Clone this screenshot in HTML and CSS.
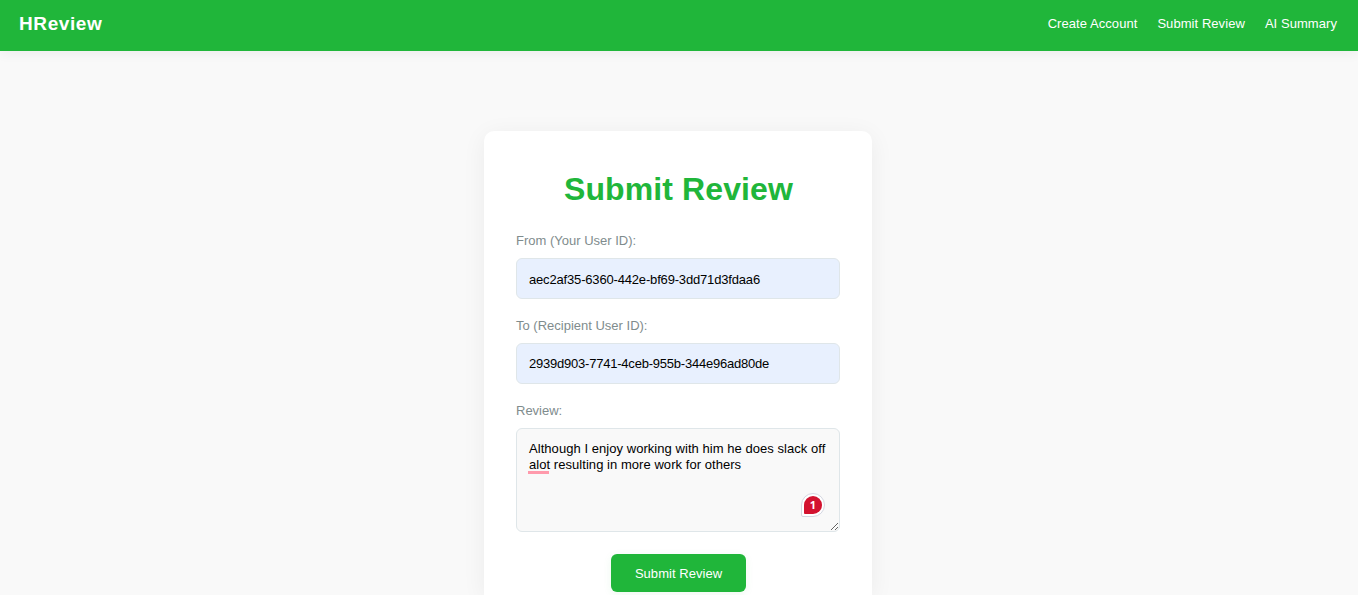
FILE: index.html
```html
<!DOCTYPE html>
<html lang="en">
<head>
    <meta charset="UTF-8">
    <title>Submit Review - HReview</title>
    <link rel="stylesheet" href="styles.css">
</head>
<body>
    <nav class="navbar">
        <div class="logo">HReview</div>
        <div class="nav-links">
            <a href="#">Create Account</a>
            <a href="#">Submit Review</a>
            <a href="#">AI Summary</a>
        </div>
    </nav>

    <div class="container">
        <h1 class="title">Submit Review</h1>
        <form id="reviewForm">
            <label for="fromUser">From (Your User ID):</label>
            <input type="text" class="from-user" id="fromUser" name="fromUser" value="aec2af35-6360-442e-bf69-3dd71d3fdaa6" required>

            <label for="toUser">To (Recipient User ID):</label>
            <input type="text" class="to-user" id="toUser" name="toUser" value="2939d903-7741-4ceb-955b-344e96ad80de" required>

            <label for="review">Review:</label>
            <div class="review-field">
                <textarea id="review" name="review" spellcheck="false" required>Although I enjoy working with him he does slack off alot resulting in more work for others</textarea>
                <span class="underline"></span>
                <span class="badge"><span class="count">1</span></span>
            </div>

            <button type="submit" class="btn">Submit Review</button>
        </form>
    </div>
</body>
</html>
```

FILE: styles.css
```css
* { box-sizing: border-box; }
body { margin: 0; background: #f9f9f9; font-family: "Liberation Sans", Arial, sans-serif; font-size: 13px; }
.navbar { display: flex; justify-content: space-between; height: 51px; padding: 12px 21px 0 19px; background: #20b63a; color: white; box-shadow: 0 2px 12px rgba(0,0,0,0.06); }
.logo { font-size: 19px; line-height: 23px; font-weight: bold; letter-spacing: 0.6px; }
.nav-links { display: flex; gap: 20px; line-height: 23px; letter-spacing: 0.06px; }
.nav-links a { color: white; text-decoration: none; }
.container { width: 388px; height: 464px; margin: 80px auto 0 484px; padding: 40px 32px 0; background: white; border-radius: 10px 10px 0 0; box-shadow: 0 4px 24px rgba(0,0,0,0.06); }
.title { margin: 0 0 26px; padding-left: 1px; text-align: center; color: #20b63a; font-size: 32px; line-height: 36px; letter-spacing: 0.1px; }
label { display: block; margin-bottom: 10px; color: #7f8c8d; line-height: 15px; }
input, textarea { display: block; width: 100%; padding: 12px; border: 1px solid #dfe6e9; border-radius: 6px; color: black; font-family: inherit; font-size: 13px; }
input { height: 41px; margin-bottom: 19px; background: #e8f0fe; }
.from-user { padding: 13px 12px 11px; letter-spacing: -0.17px; }
.to-user { letter-spacing: -0.22px; }
textarea { height: 104px; background: #f9f9f9; line-height: 16px; letter-spacing: 0.05px; resize: vertical; }
.review-field { position: relative; margin-bottom: 22px; }
.underline { position: absolute; left: 12px; top: 43px; width: 21px; height: 3px; background: #ff9aac; }
.badge { position: absolute; left: 285px; top: 65px; width: 24px; height: 24px; padding: 2px; border: 1px solid #d5d7e2; border-radius: 50% 50% 50% 2px; background: white; }
.count { display: block; width: 18px; height: 18px; border-radius: 50% 50% 50% 1px; background: #d3122f; color: white; font: bold 11px/18px "Open Sans", sans-serif; text-align: center; }
.btn { display: block; width: 135px; height: 38px; margin: 0 auto; padding: 0 0 0 1px; border: none; border-radius: 6px; background: #20b63a; box-shadow: 0 2px 8px rgba(32,182,58,0.08); color: white; font: 13px "Liberation Sans", Arial, sans-serif; letter-spacing: 0.04px; cursor: pointer; }
```
